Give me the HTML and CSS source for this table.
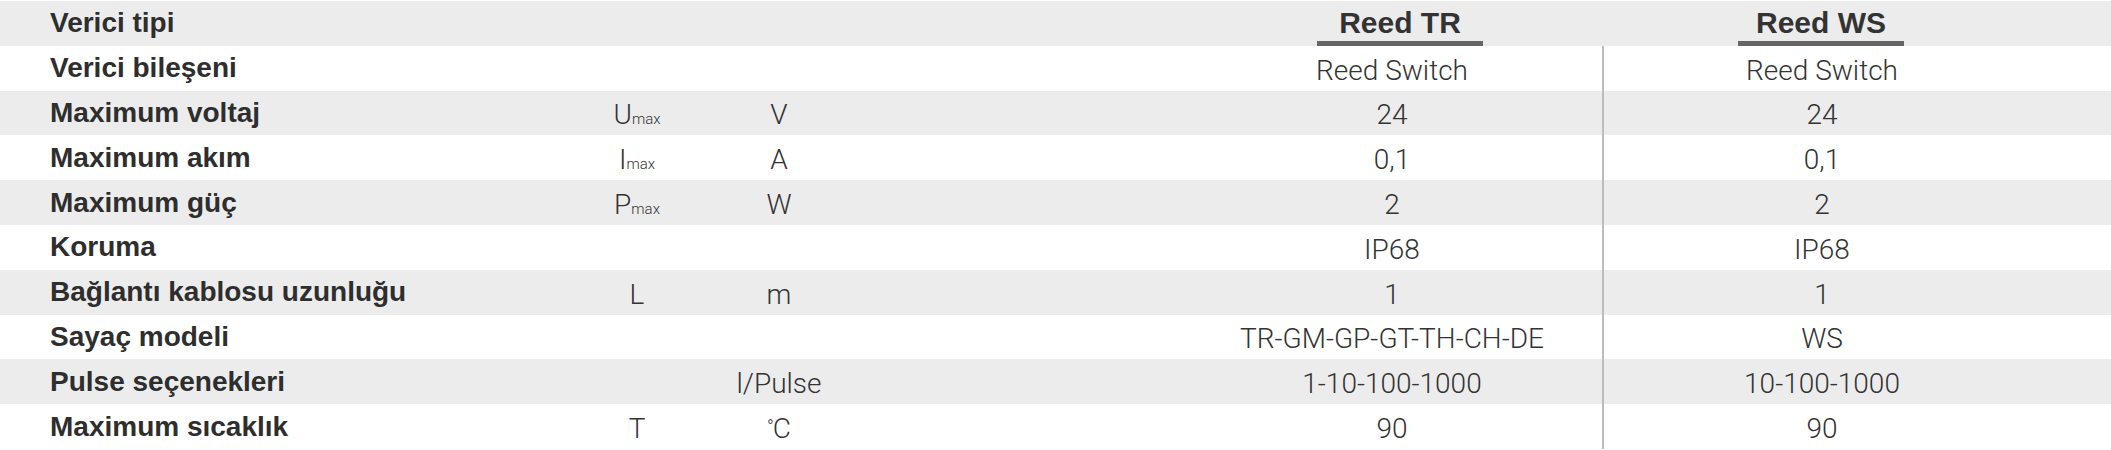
FILE: index.html
```html
<!DOCTYPE html>
<html lang="tr">
<head>
<meta charset="utf-8">
<title>Verici</title>
<link rel="stylesheet" href="styles.css">
</head>
<body>
<div class="spec">
  <div class="row shade head">
    <div class="lbl">Verici tipi</div>
    <div class="sym"></div>
    <div class="unit"></div>
    <div class="gap"></div>
    <div class="val tr"><span class="hd">Reed TR</span></div>
    <div class="val ws"><span class="hd">Reed WS</span></div>
  </div>
  <div class="row">
    <div class="lbl">Verici bileşeni</div>
    <div class="sym"></div>
    <div class="unit"></div>
    <div class="gap"></div>
    <div class="val tr">Reed Switch</div>
    <div class="val ws sep">Reed Switch</div>
  </div>
  <div class="row shade">
    <div class="lbl">Maximum voltaj</div>
    <div class="sym"><span>U<small>max</small></span></div>
    <div class="unit">V</div>
    <div class="gap"></div>
    <div class="val tr">24</div>
    <div class="val ws sep">24</div>
  </div>
  <div class="row">
    <div class="lbl">Maximum akım</div>
    <div class="sym"><span>I<small>max</small></span></div>
    <div class="unit">A</div>
    <div class="gap"></div>
    <div class="val tr">0,1</div>
    <div class="val ws sep">0,1</div>
  </div>
  <div class="row shade">
    <div class="lbl">Maximum güç</div>
    <div class="sym"><span>P<small>max</small></span></div>
    <div class="unit">W</div>
    <div class="gap"></div>
    <div class="val tr">2</div>
    <div class="val ws sep">2</div>
  </div>
  <div class="row">
    <div class="lbl">Koruma</div>
    <div class="sym"></div>
    <div class="unit"></div>
    <div class="gap"></div>
    <div class="val tr">IP68</div>
    <div class="val ws sep">IP68</div>
  </div>
  <div class="row shade">
    <div class="lbl">Bağlantı kablosu uzunluğu</div>
    <div class="sym"><span>L</span></div>
    <div class="unit">m</div>
    <div class="gap"></div>
    <div class="val tr">1</div>
    <div class="val ws sep">1</div>
  </div>
  <div class="row">
    <div class="lbl">Sayaç modeli</div>
    <div class="sym"></div>
    <div class="unit"></div>
    <div class="gap"></div>
    <div class="val tr">TR-GM-GP-GT-TH-CH-DE</div>
    <div class="val ws sep">WS</div>
  </div>
  <div class="row shade">
    <div class="lbl">Pulse seçenekleri</div>
    <div class="sym"></div>
    <div class="unit">l/Pulse</div>
    <div class="gap"></div>
    <div class="val tr">1-10-100-1000</div>
    <div class="val ws sep">10-100-1000</div>
  </div>
  <div class="row">
    <div class="lbl">Maximum sıcaklık</div>
    <div class="sym"><span>T</span></div>
    <div class="unit"><span class="deg">°</span>C</div>
    <div class="gap"></div>
    <div class="val tr">90</div>
    <div class="val ws sep">90</div>
  </div>
</div>
</body>
</html>
```
FILE: styles.css
```css
html, body {
  margin: 0;
  padding: 0;
  background: #ffffff;
}

.spec {
  width: 2111px;
  padding-top: 1px;
  color: #333333;
}

.row {
  display: grid;
  grid-template-columns: 560px 154px 130px 344px 414px 438px 71px;
  height: 44.8px;
}

.row.shade {
  background: #ececec;
}

.lbl,
.sym,
.unit,
.val,
.gap {
  display: flex;
  align-items: center;
}

.lbl {
  padding-left: 50px;
  font-family: "Liberation Sans", Arial, sans-serif;
  font-weight: 700;
  font-size: 28px;
  color: #2e2e2e;
}

.sym,
.unit,
.val {
  justify-content: center;
  padding-top: 4px;
  font-family: "Roboto", "Liberation Sans", sans-serif;
  font-weight: 300;
  font-size: 28px;
  color: #333333;
}

.sym small {
  font-size: 15px;
}

.deg {
  font-size: 18px;
  margin-right: -1px;
  align-self: flex-start;
  margin-top: 8px;
}

.val.tr {
  padding-right: 6px;
}

.sep {
  border-left: 2px solid #bdbdbd;
}

.head .val {
  align-items: stretch;
  padding-top: 0;
}

.hd {
  display: flex;
  align-items: center;
  justify-content: center;
  width: 166px;
  box-sizing: border-box;
  border-bottom: 5px solid #666666;
  font-family: "Liberation Sans", Arial, sans-serif;
  font-weight: 700;
  font-size: 30px;
  color: #333333;
  padding-top: 4px;
}

.head .val.tr {
  padding-right: 0;
  padding-left: 10px;
}
```
